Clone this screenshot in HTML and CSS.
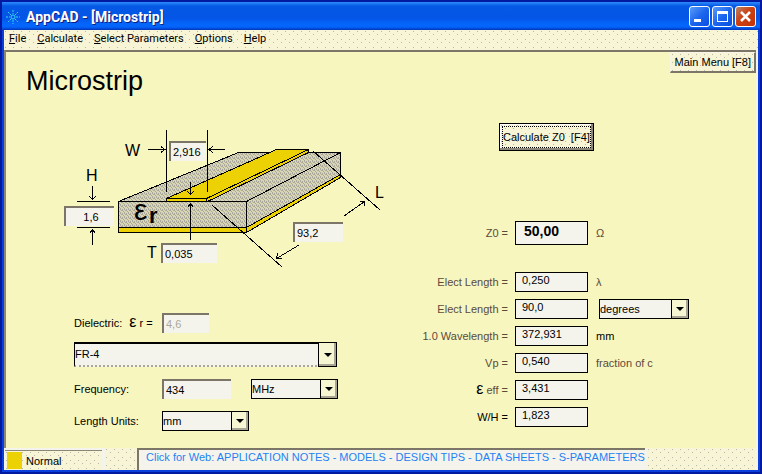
FILE: index.html
```html
<!DOCTYPE html>
<html lang="en">
<head>
  <meta charset="UTF-8">
  <meta name="viewport" content="width=device-width, initial-scale=1.0">
  <title>AppCAD - [Microstrip]</title>
  <link rel="stylesheet" href="styles.css">
</head>
<body>
  <div class="window">

    <!-- Title bar -->
    <header class="titlebar">
      <svg class="app-icon" width="14" height="14" viewBox="0 0 14 14" fill="none" stroke="#35d6f5">
        <path d="M7 0v4M7 10v4M0 7h4M10 7h4M2 2l3 3M9 9l3 3M12 2l-3 3M5 9l-3 3" stroke-dasharray="2 1"/>
        <circle cx="7" cy="7" r="2"/>
      </svg>
      <span class="title">AppCAD - [Microstrip]</span>
      <div class="window-buttons">
        <button class="win-btn" aria-label="Minimize">
          <svg width="19" height="19" viewBox="0 0 19 19"><path d="M4 12h7v3H4z" fill="#fff"/></svg>
        </button>
        <button class="win-btn" aria-label="Maximize">
          <svg width="19" height="19" viewBox="0 0 19 19"><path d="M4 4h11v11H4zM5 7v7h9V7z" fill="#fff" fill-rule="evenodd"/></svg>
        </button>
        <button class="win-btn close" aria-label="Close">
          <svg width="19" height="19" viewBox="0 0 19 19"><path d="M5 5l9 9M14 5l-9 9" stroke="#fff" stroke-width="2.5"/></svg>
        </button>
      </div>
    </header>

    <!-- Menu -->
    <nav class="menu dither">
      <a href="#"><u>F</u>ile</a>
      <a href="#"><u>C</u>alculate</a>
      <a href="#"><u>S</u>elect Parameters</a>
      <a href="#"><u>O</u>ptions</a>
      <a href="#"><u>H</u>elp</a>
    </nav>

    <main class="content">
      <div class="heading">
        <h1>Microstrip</h1>
        <button class="main-menu dither">Main Menu [F8]</button>
      </div>

      <div class="columns">
        <section class="inputs">

          <!-- Microstrip drawing -->
          <div class="diagram">
            <svg width="330" height="146" viewBox="60 126 330 146" shape-rendering="crispEdges">
              <defs>
                <pattern id="substrate" width="4" height="4" patternUnits="userSpaceOnUse">
                  <rect width="4" height="4" fill="#d8d6b4"/>
                  <path d="M0 0h1v2H0zM2 1h1v2H2zM1 2h1v1H1zM3 3h1v1H3z" fill="#aaa79c"/>
                </pattern>
              </defs>
              <g stroke="#000">
                <path d="M118.5 201.5L238.5 152.5H340.5V174.5L246.5 227.5H118.5z" fill="url(#substrate)"/>
                <path d="M118.5 227.5H246.5L340.5 174.5V177.5L246.5 232.5H118.5z" fill="#ecd204"/>
                <path d="M118.5 201.5H246.5V232.5M246.5 201.5L340.5 152.5" fill="none"/>
                <path d="M166.5 198.5H206.5L308.5 149.5V152.5L207.5 201.5H166.5z" fill="#ecd204"/>
                <path d="M166.5 198.5L276.5 149.5H308.5L206.5 198.5z" fill="#ecd204"/>
                <path d="M206.5 198.5V201.5" fill="none"/>
              </g>
              <!-- Dimension lines -->
              <g stroke="#000" fill="none">
                <path d="M166.5 130V192M207.5 130V192"/>
                <path d="M148 149.5H165M161 146.5l4 3l-4 3M225 149.5H209M213 146.5l-4 3l4 3"/>
                <path d="M77 201.5H110M77 227.5H110"/>
                <path d="M92.5 186V200M89.5 196.5l3 3l3-3M92.5 245V229M89.5 233.5l3-4l3 4"/>
                <path d="M190.5 182V195M187.5 191.5l3 3l3-3M190.5 240V203M187.5 207.5l3-4l3 4"/>
                <path d="M212 205L282 267M313 151L380 210"/>
                <path d="M344 216L364.500 201.5M359.500 201.5h5v4M299 245L276.500 258.5M277.500 253.500l-1 5h5"/>
              </g>
              <g class="dim">
                <text x="125" y="156">W</text>
                <text x="86" y="181">H</text>
                <text x="147" y="258">T</text>
                <text x="375" y="198">L</text>
              </g>
              <text class="eps" x="134" y="220">ε</text>
              <text class="eps-r" x="149" y="223">r</text>
            </svg>
            <input class="field field-w" type="text" value="2,916" aria-label="W">
            <input class="field field-h" type="text" value="1,6" aria-label="H">
            <input class="field field-t" type="text" value="0,035" aria-label="T">
            <input class="field field-l" type="text" value="93,2" aria-label="L">
          </div>

          <!-- Material and units -->
          <form class="settings">
            <div class="row row-first">
              <label for="er">Dielectric: <span class="small-eps">ε</span> r =</label>
              <input class="field er" id="er" type="text" value="4,6" disabled>
            </div>
            <span class="combo combo-wide">
              <select aria-label="Dielectric material">
                <option>FR-4</option>
              </select>
            </span>
            <div class="row">
              <label for="freq">Frequency:</label>
              <input class="field freq" id="freq" type="text" value="434">
              <span class="combo">
                <select aria-label="Frequency unit">
                  <option>MHz</option>
                </select>
              </span>
            </div>
            <div class="row">
              <label for="units">Length Units:</label>
              <span class="combo">
                <select id="units">
                  <option>mm</option>
                </select>
              </span>
            </div>
          </form>
        </section>

        <section class="results">
          <button class="calculate dither"><span>Calculate Z0&nbsp; [F4]</span></button>

          <div class="result-grid">
            <label class="z0" for="z0">Z0 =</label>
            <input class="result z0" id="z0" value="50,00" readonly>
            <span class="unit z0">Ω</span>

            <label for="len1">Elect Length =</label>
            <input class="result" id="len1" value="0,250" readonly>
            <span class="unit">λ</span>

            <label for="len2">Elect Length =</label>
            <input class="result" id="len2" value="90,0" readonly>
            <span class="combo combo-angle">
              <select aria-label="Angle unit">
                <option>degrees</option>
              </select>
            </span>

            <label for="wave">1.0 Wavelength =</label>
            <input class="result" id="wave" value="372,931" readonly>
            <span class="unit dark">mm</span>

            <label for="vp">Vp =</label>
            <input class="result" id="vp" value="0,540" readonly>
            <span class="unit">fraction of c</span>

            <label for="eeff"><span class="small-eps">ε</span> eff =</label>
            <input class="result" id="eeff" value="3,431" readonly>
            <span></span>

            <label class="dark" for="wh">W/H =</label>
            <input class="result" id="wh" value="1,823" readonly>
            <span></span>
          </div>
        </section>
      </div>
    </main>

    <!-- Status bar -->
    <footer class="status">
      <div class="state dither"><span class="lamp"></span>Normal</div>
      <div class="spacer dither"></div>
      <a class="web" href="#">Click for Web: APPLICATION NOTES - MODELS - DESIGN TIPS - DATA SHEETS - S-PARAMETERS</a>
      <div class="rest dither"></div>
    </footer>
  </div>
</body>
</html>
```
FILE: styles.css
```css
* {
  box-sizing: border-box;
}
body {
  margin: 0;
  font-family: "Liberation Sans", Arial, sans-serif;
  font-size: 11px;
  line-height: 14px;
  color: #000;
  background-color: #0a2fc8;
}
button, input, select {
  font: inherit;
  color: inherit;
}
.window {
  display: flex;
  flex-direction: column;
  min-height: 100vh;
  border: 4px solid #0a3fdc;
  border-top: none;
  background-color: #f5f4ec;
  outline: 2px solid #0019a0;
  outline-offset: -2px;
}
.dither {
  background-color: #f7f5d6;
  background-image:
    conic-gradient(at 1px 1px, transparent 75%, #b9b6ae 0),
    conic-gradient(at 1px 1px, transparent 75%, #b9b6ae 0);
  background-size: 8px 8px, 8px 8px;
  background-position: 1px 1px, 5px 4px;
}

/* Title bar */
.titlebar {
  display: flex;
  align-items: center;
  height: 30px;
  margin: 0 -4px;
  padding: 3px 6px 0;
  background: linear-gradient(#0a46c8 0, #3a94fc 1px, #2480f8 3px, #0558e4 6px, #0455e6 18px, #0466fc 24px, #0364fa 27px, #0135b8 30px);
}
.title {
  flex: 1;
  margin-left: 6px;
  font-family: Roboto, sans-serif;
  font-size: 14px;
  font-weight: bold;
  color: #fff;
  text-shadow: 1px 1px 0 #0a1f80;
}
.window-buttons {
  display: flex;
  gap: 2px;
}
.win-btn {
  width: 21px;
  height: 21px;
  padding: 0;
  border: 1px solid #fff;
  border-radius: 3px;
  background: linear-gradient(135deg, #5a9cf8, #1c66ee 50%, #0a4ee0);
}
.win-btn svg {
  display: block;
}
.win-btn.close {
  background: linear-gradient(135deg, #b88468, #cc4012 45%, #c03408);
}

/* Menu */
.menu {
  display: flex;
  gap: 11px;
  height: 20px;
  padding: 2px 5px 0;
  font-family: Roboto, sans-serif;
}
.menu a {
  color: #000;
  text-decoration: none;
}

/* Main area */
.content {
  flex: 1;
  margin-right: 2px;
  border-top: 2px solid #7c7668;
  border-left: 2px solid #8c8678;
  background-color: #f7f6bf;
}
.heading {
  display: flex;
  justify-content: space-between;
  align-items: flex-start;
}
h1 {
  margin: 12px 0 0 20px;
  font-size: 27px;
  font-weight: normal;
  line-height: 34px;
}
.main-menu {
  height: 21px;
  padding: 0 3px 0 4px;
  border: 1px solid #f7f6e4;
  border-right: 2px solid #7c7668;
  border-bottom: 2px solid #7c7668;
}
.columns {
  display: grid;
  grid-template-columns: 404px 1fr;
}

/* Text fields */
.field {
  height: 20px;
  padding: 0 0 0 2px;
  border: none;
  border-top: 2px solid #7c7668;
  border-left: 2px solid #7c7668;
  background-color: #f5f4ec;
}
.field:disabled {
  color: #aaa89c;
}

/* Diagram */
.diagram {
  position: relative;
  width: 330px;
  margin: 28px 0 0 54px;
}
.diagram svg {
  display: block;
}
.diagram .field {
  position: absolute;
}
.field-w {
  left: 109px;
  top: 15px;
  width: 37px;
}
.field-h {
  left: 4px;
  top: 80px;
  width: 50px;
  text-align: center;
}
.field-t {
  left: 101px;
  top: 117px;
  width: 56px;
}
.field-l {
  left: 233px;
  top: 96px;
  width: 50px;
}
.dim {
  font-size: 16px;
}
.eps {
  font-size: 30px;
}
.eps-r {
  font-size: 22px;
  font-weight: bold;
}

/* Settings form */
.settings {
  display: flex;
  flex-direction: column;
  gap: 10px;
  margin: 41px 0 0 68px;
}
.row {
  display: flex;
  align-items: center;
  height: 22px;
}
.row-first {
  height: 19px;
}
.row label {
  width: 88px;
  white-space: pre;
}
.small-eps {
  margin-left: 4px;
  font-size: 16px;
  color: #000;
}
.er {
  width: 47px;
}
.freq {
  width: 69px;
  margin-right: 20px;
}

/* Drop-down lists */
.combo {
  position: relative;
  width: 87px;
  height: 20px;
}
.combo select {
  display: block;
  width: 100%;
  height: 100%;
  padding: 0;
  border: 1px solid #000;
  border-radius: 0;
  color: #000;
  background-color: #f5f4ec;
  appearance: none;
}
.combo::before {
  content: "";
  position: absolute;
  top: 1px;
  right: 1px;
  bottom: 1px;
  width: 16px;
  border-left: 1px solid #000;
  background-color: #f7f6d2;
  box-shadow: inset -2px -2px 0 #a9a695;
  pointer-events: none;
}
.combo::after {
  content: "";
  position: absolute;
  top: 8px;
  right: 5px;
  border: 4px solid transparent;
  border-top-color: #000;
  border-bottom: none;
  pointer-events: none;
}
.combo-wide {
  width: 263px;
  height: 25px;
  margin-bottom: 1px;
}
.combo-wide select {
  padding-bottom: 2px;
  border-top: 2px solid #000;
  border-bottom: 2px dotted #a9a695;
}
.combo-wide::before {
  top: 0;
  right: 0;
  bottom: 0;
  width: 17px;
  border: 1px solid #000;
}
.combo-wide::after {
  top: 11px;
}
.combo-angle {
  width: 90px;
  margin-left: 4px;
}

/* Results */
.calculate {
  height: 28px;
  margin: 25px 0 0 89px;
  padding: 2px;
  border: 1px solid #000;
  box-shadow: inset -2px -2px 0 #8c8678, inset 1px 1px 0 #fff;
}
.calculate span {
  display: block;
  padding: 3px 0;
  border: 1px dotted #000;
}
.result-grid {
  display: grid;
  grid-template-columns: 98px 73px auto;
  grid-template-rows: 43px;
  grid-auto-rows: 19px;
  column-gap: 7px;
  row-gap: 8px;
  align-items: center;
  justify-content: start;
  margin-top: 70px;
  color: #5c4a3c;
}
.result-grid label {
  text-align: right;
}
.result {
  width: 100%;
  height: 20px;
  padding: 0 0 3px 6px;
  border: 1px solid #000;
  color: #000;
  background-color: #f5f4ec;
}
.result-grid .z0 {
  margin-bottom: 19px;
}
.result.z0 {
  height: 24px;
  padding: 0 0 4px 8px;
  font-size: 14px;
  font-weight: bold;
}
.unit {
  padding-left: 1px;
}
.dark {
  color: #000;
}

/* Status bar */
.status {
  display: flex;
  height: 22px;
  padding: 0 3px 0 1px;
}
.state {
  display: flex;
  align-items: center;
  gap: 4px;
  width: 97px;
  margin-top: 2px;
  border-top: 1px solid #8c8678;
}
.lamp {
  width: 15px;
  height: 17px;
  margin-left: 2px;
  background-color: #ecd204;
}
.spacer {
  width: 32px;
  margin-left: 3px;
}
.web {
  padding: 0 0 0 7px;
  border-top: 2px solid #7c7668;
  border-left: 2px solid #7c7668;
  color: #1e82f4;
  text-decoration: none;
  white-space: nowrap;
}
.rest {
  flex: 1;
  margin-left: 2px;
}
```
